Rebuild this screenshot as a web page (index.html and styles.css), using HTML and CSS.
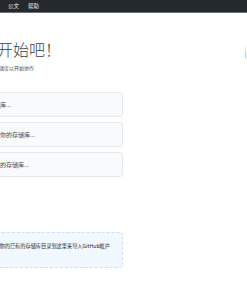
FILE: index.html
```html
<!DOCTYPE html>
<html lang="zh">
<head>
<meta charset="utf-8">
<title>开始吧</title>
<link rel="stylesheet" href="styles.css">
</head>
<body>
<header class="titlebar">
  <span class="menu-item">公文</span>
  <span class="menu-item">帮助</span>
</header>
<main class="main">
  <section class="left">
    <h1 class="title">让我们开始吧！</h1>
    <p class="subtitle">创建、添加或者克隆存储库以开始协作</p>
    <div class="cards">
      <div class="card">创建一个新存储库...</div>
      <div class="card">从互联网上克隆你的存储库...</div>
      <div class="card">从硬盘添加已有的存储库...</div>
    </div>
    <div class="drop">提示：你可以拖动你的已有的存储库目录到这里来导入GitHub帐户</div>
  </section>
  <aside class="right">
    <div class="art"><div class="art-top"></div><div class="art-bottom"></div></div>
  </aside>
</main>
</body>
</html>
```

FILE: styles.css
```css
html, body {
  margin: 0;
  padding: 0;
  background: #ffffff;
  overflow: hidden;
}
body {
  width: 247px;
  height: 296px;
  font-family: "Noto Sans CJK SC", "Noto Sans", sans-serif;
  color: #24292e;
}
.titlebar {
  height: 12px;
  background: #24292e;
  border-bottom: 1px solid #6a737d;
  display: flex;
  align-items: center;
  gap: 9px;
  padding-left: 8px;
  box-sizing: content-box;
}
.menu-item {
  color: #e8eaed;
  font-size: 5.5px;
  line-height: 12px;
}
.main {
  display: flex;
  align-items: flex-start;
}
.left {
  width: 174px;
  flex: none;
  margin-left: -51px;
  display: flex;
  flex-direction: column;
}
.title {
  margin: 27px 0 0 0;
  font-size: 16px;
  line-height: 19px;
  font-weight: 300;
  color: #3a3f44;
  white-space: nowrap;
}
.subtitle {
  margin: 5px 0 0 0;
  font-size: 5px;
  line-height: 7px;
  color: #444d56;
  white-space: nowrap;
}
.cards {
  margin-top: 21px;
  display: flex;
  flex-direction: column;
  gap: 5px;
}
.card {
  height: 25px;
  box-sizing: border-box;
  background: #f9fafb;
  border: 1px solid #e6e8eb;
  border-radius: 3px;
  padding: 0 8px;
  display: flex;
  align-items: center;
  font-size: 6px;
  color: #444d56;
  white-space: nowrap;
}
.drop {
  margin-top: 55px;
  height: 36px;
  box-sizing: border-box;
  background: #f1f8ff;
  border: 1px dashed #c8e1ff;
  border-radius: 3px;
  padding: 9px 8px 0 8px;
  font-size: 5.2px;
  line-height: 7px;
  color: #24292e;
  white-space: nowrap;
}
.right {
  margin-left: 122px;
  padding-top: 34px;
}
.art {
  width: 1px;
  display: flex;
  flex-direction: column;
}
.art-top {
  height: 5px;
  background: #e1e4e8;
}
.art-bottom {
  height: 6px;
  background: #a9cdf2;
}
```
